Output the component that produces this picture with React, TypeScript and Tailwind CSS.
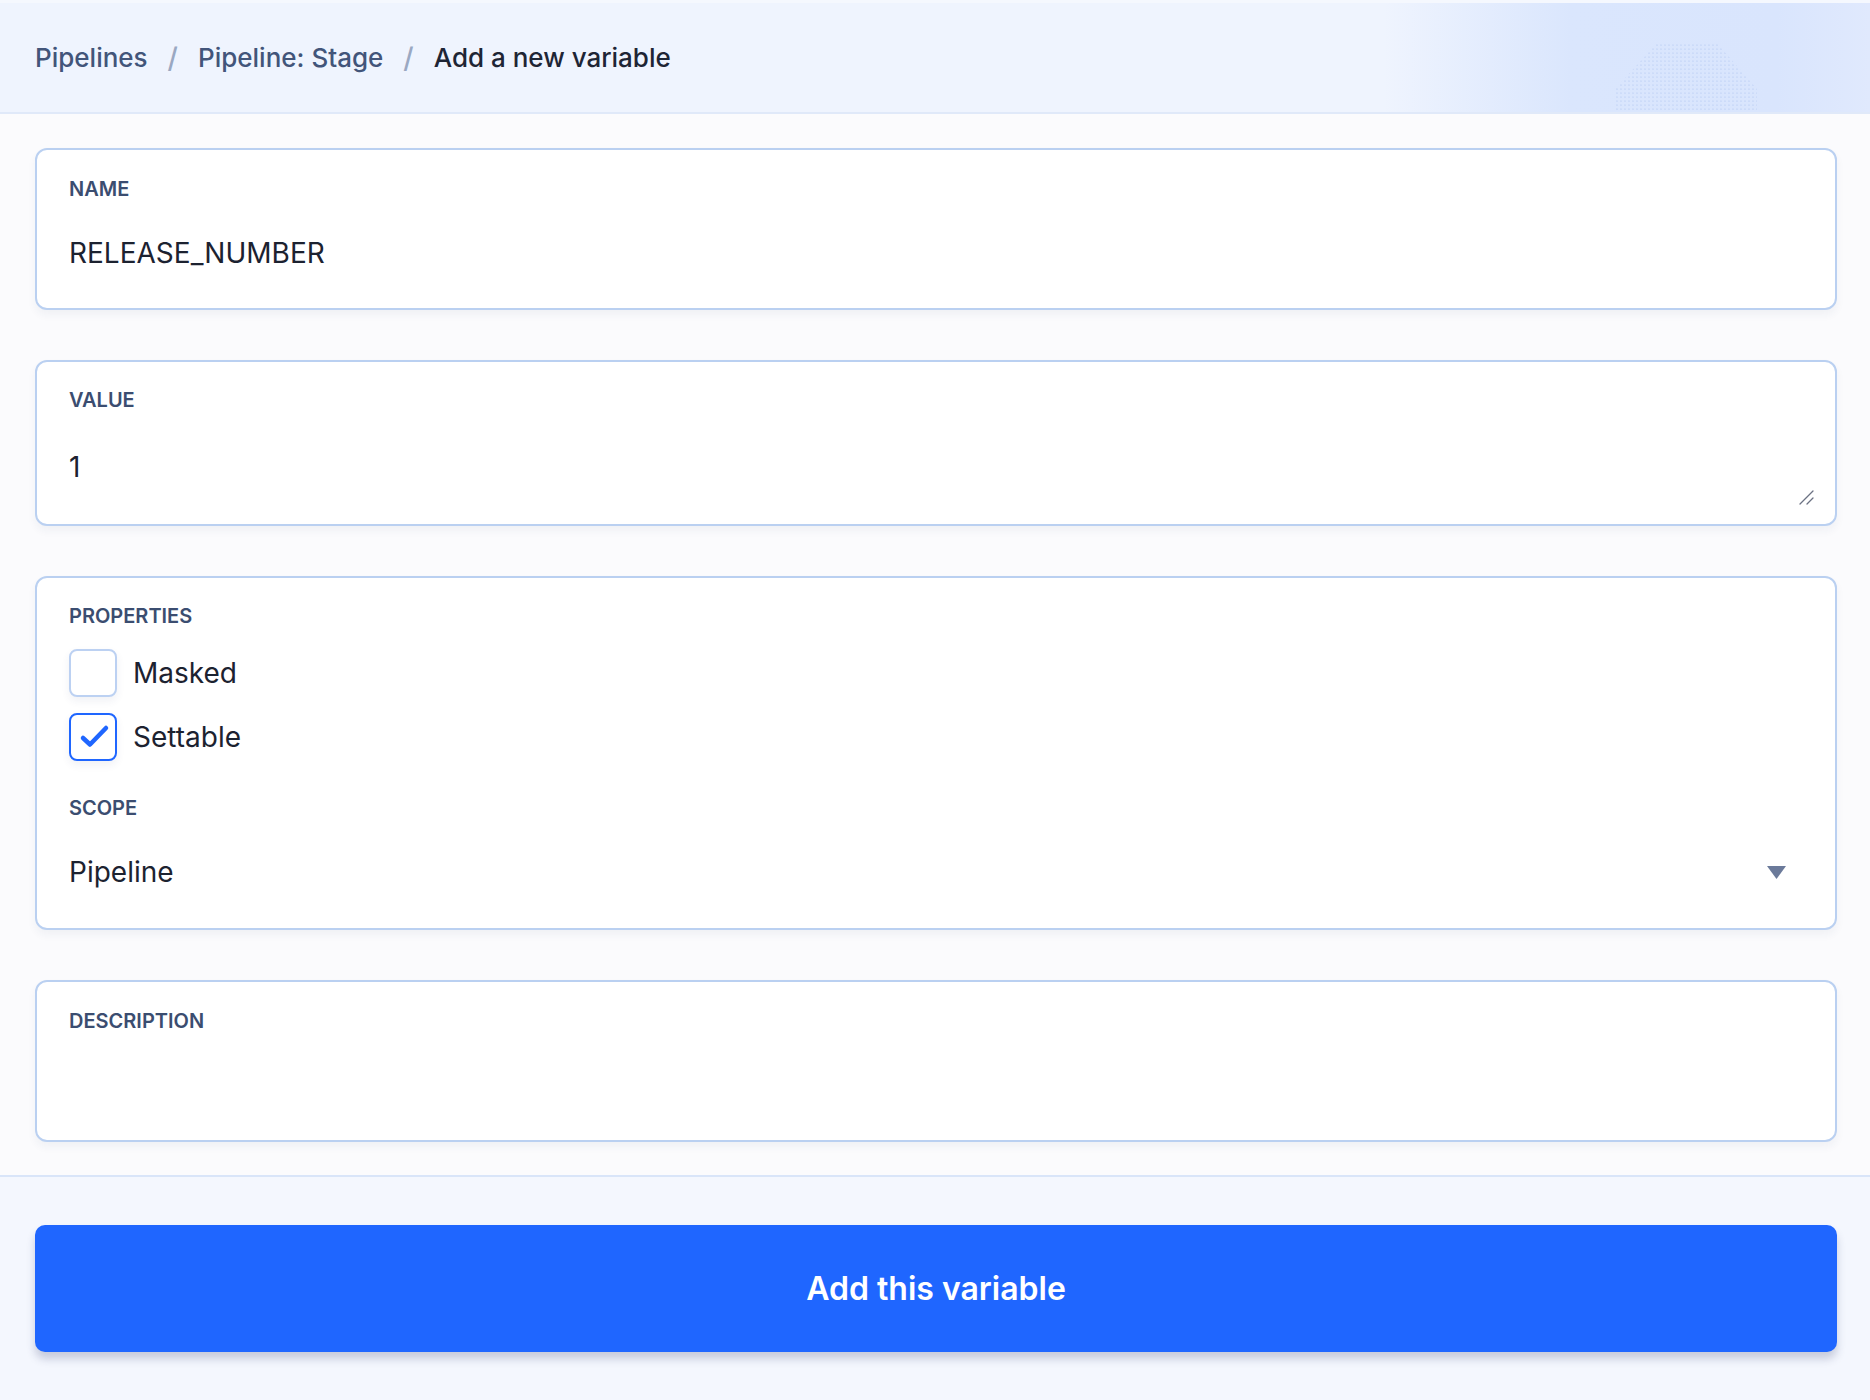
import type { ReactNode } from "react";

function Card({ children, className = "" }: { children: ReactNode; className?: string }) {
  return (
    <section
      className={`rounded-[12px] border-2 border-[#bad0f1] bg-white px-[32px] shadow-[0_5px_8px_rgba(40,50,100,0.05)] ${className}`}
    >
      {children}
    </section>
  );
}

function FieldLabel({ children }: { children: ReactNode }) {
  return (
    <div className="text-[20px] font-semibold uppercase leading-[24px] text-[#3b4d70]">{children}</div>
  );
}

function Checkbox({ label, checked }: { label: string; checked?: boolean }) {
  return (
    <label className="flex items-center gap-[16px]">
      <span
        className={`grid size-[48px] place-items-center rounded-[8px] border-2 bg-white shadow-[0_4px_8px_rgba(40,60,120,0.07)] ${
          checked ? "border-[#1f66ff]" : "border-[#bcd1f2]"
        }`}
      >
        {checked && (
          <svg width="44" height="44" viewBox="0 0 44 44" aria-hidden="true">
            <polyline
              points="12,23 19,29.5 35,13"
              fill="none"
              stroke="#1f66ff"
              strokeWidth="4.5"
              strokeLinecap="round"
              strokeLinejoin="round"
            />
          </svg>
        )}
      </span>
      <span className="text-[28px] leading-[40px] text-[#1c2230]">{label}</span>
    </label>
  );
}

function Dots() {
  return (
    <svg
      className="pointer-events-none absolute right-[113px] top-[40px]"
      width="142"
      height="74"
      viewBox="0 0 142 74"
      aria-hidden="true"
    >
      <defs>
        <pattern id="dots" width="4" height="4" patternUnits="userSpaceOnUse">
          <circle cx="2" cy="2" r="0.6" fill="#a9bfec" />
        </pattern>
        <clipPath id="blob">
          <polygon points="42,0 102,0 142,46 142,74 0,74 0,46" />
        </clipPath>
      </defs>
      <rect width="142" height="74" fill="url(#dots)" clipPath="url(#blob)" />
    </svg>
  );
}

function Slash() {
  return <span className="mx-[20px] text-[28px] text-[#9aa8c2]">/</span>;
}

export default function App() {
  return (
    <div className="min-h-screen bg-[#fbfbfd] font-['Inter',sans-serif] text-[#1c2230]">
      <header className="relative flex h-[114px] items-center overflow-hidden border-t-[3px] border-b-2 border-t-[#f5f8fe] border-b-[#e0e9f9] bg-[linear-gradient(90deg,#eff4fe_0%,#eff4fe_74%,#dae6fd_84%,#d9e5fd_95%,#e0e9fd_100%)] px-[35px]">
        <nav className="flex items-center text-[26px] font-medium">
          <a className="text-[#42557a]">Pipelines</a>
          <Slash />
          <a className="text-[#42557a]">Pipeline: Stage</a>
          <Slash />
          <span className="text-[#1e2535]">Add a new variable</span>
        </nav>
        <Dots />
      </header>

      <main className="flex flex-col gap-[50px] pl-[35px] pr-[33px] pt-[34px] pb-[33px]">
        <Card className="pt-[27px] pb-[35px]">
          <FieldLabel>Name</FieldLabel>
          <input
            readOnly
            value="RELEASE_NUMBER"
            className="mt-[32px] block h-[40px] w-full bg-transparent text-[28px] leading-[40px] text-[#1c2230] outline-none"
          />
        </Card>

        <Card className="pt-[26px] pb-[17px]">
          <FieldLabel>Value</FieldLabel>
          <div className="relative mt-[35px] mr-[-13px]">
            <textarea
              readOnly
              value="1"
              className="block h-[60px] w-full resize-none bg-transparent p-0 text-[28px] leading-[40px] text-[#1c2230] outline-none"
            />
            <svg
              className="pointer-events-none absolute bottom-[2px] right-[2px]"
              width="15"
              height="15"
              viewBox="0 0 15 15"
              aria-hidden="true"
            >
              <path d="M1 14 L14 1 M8 14 L14 8" stroke="#6b7183" strokeWidth="1.3" strokeLinecap="round" />
            </svg>
          </div>
        </Card>

        <Card className="pt-[26px] pb-[36px]">
          <FieldLabel>Properties</FieldLabel>
          <div className="mt-[21px] flex flex-col gap-[16px]">
            <Checkbox label="Masked" />
            <Checkbox label="Settable" checked />
          </div>
          <div className="mt-[35px]">
            <FieldLabel>Scope</FieldLabel>
          </div>
          <div className="mt-[32px] flex h-[40px] items-center justify-between pr-[17px]">
            <span className="text-[28px] leading-[40px] text-[#1c2230]">Pipeline</span>
            <svg width="19" height="13" viewBox="0 0 19 13" aria-hidden="true">
              <polygon points="0,0 19,0 9.5,13" fill="#6b7a9a" />
            </svg>
          </div>
        </Card>

        <Card className="pt-[27px] pb-[35px]">
          <FieldLabel>Description</FieldLabel>
          <textarea
            readOnly
            className="mt-[32px] block h-[40px] w-full resize-none bg-transparent p-0 text-[28px] leading-[40px] outline-none"
          />
        </Card>
      </main>

      <footer className="border-t-2 border-[#d9e5f9] bg-[#f4f7fe] pl-[35px] pr-[33px] pt-[48px] pb-[48px]">
        <button className="h-[127px] w-full rounded-[10px] bg-[#1f66ff] text-[32px] font-semibold text-white shadow-[0_7px_8px_rgba(40,50,100,0.22)]">
          Add this variable
        </button>
      </footer>
    </div>
  );
}
